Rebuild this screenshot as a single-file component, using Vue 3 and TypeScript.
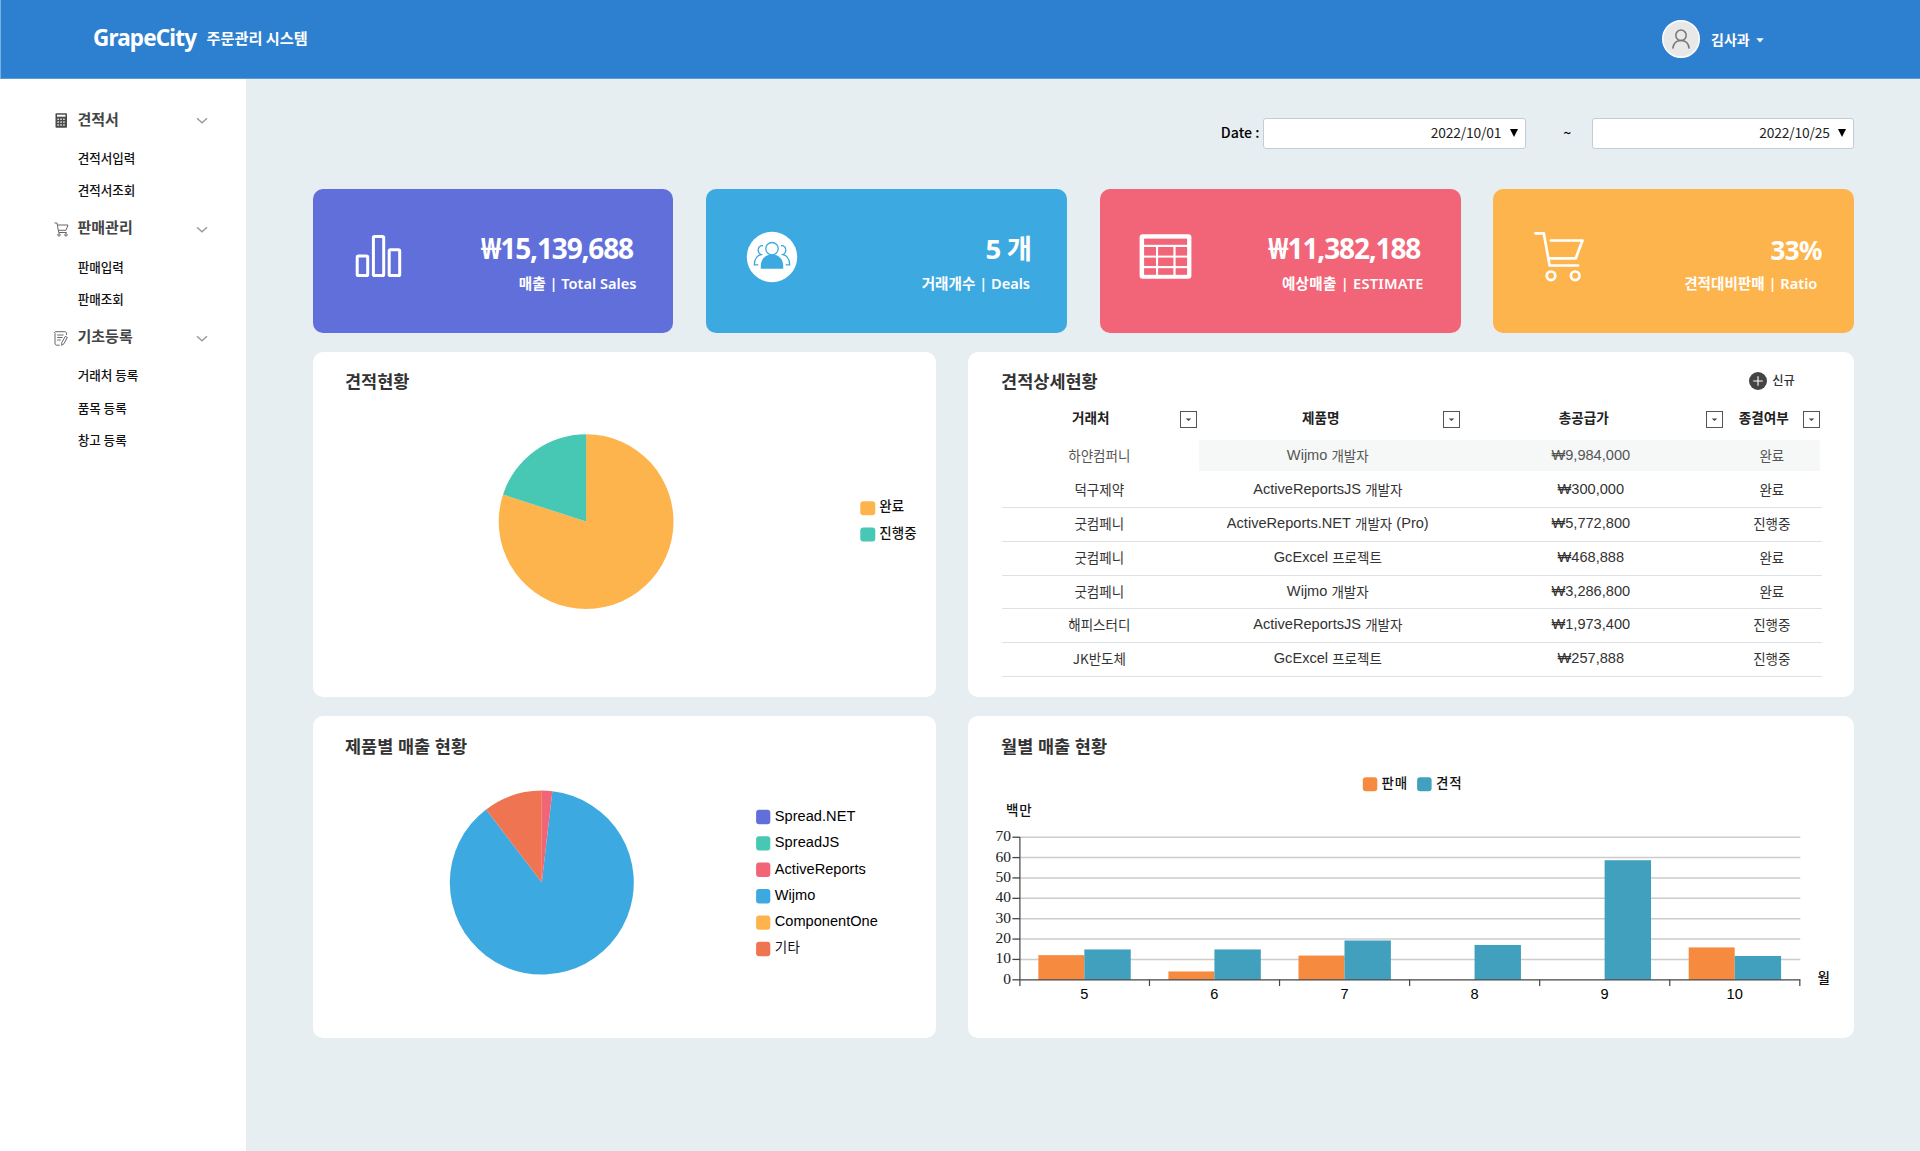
<script setup lang="ts">
interface MenuGroup { icon: 'calc' | 'cart' | 'note'; label: string; items: string[] }
interface Row { client: string; product: string; productKo: string; tail?: string; price: string; state: string }
interface Legend { label: string; color: string; width: number }

const menu: MenuGroup[] = [
  { icon: 'calc', label: '견적서', items: ['견적서입력', '견적서조회'] },
  { icon: 'cart', label: '판매관리', items: ['판매입력', '판매조회'] },
  { icon: 'note', label: '기초등록', items: ['거래처 등록', '품목 등록', '창고 등록'] },
]

const columns = ['거래처', '제품명', '총공급가', '종결여부']

const rows: Row[] = [
  { client: '하얀컴퍼니', product: 'Wijmo', productKo: '개발자', price: '9,984,000', state: '완료' },
  { client: '덕구제약', product: 'ActiveReportsJS', productKo: '개발자', price: '300,000', state: '완료' },
  { client: '굿컴페니', product: 'ActiveReports.NET', productKo: '개발자', tail: '(Pro)', price: '5,772,800', state: '진행중' },
  { client: '굿컴페니', product: 'GcExcel', productKo: '프로젝트', price: '468,888', state: '완료' },
  { client: '굿컴페니', product: 'Wijmo', productKo: '개발자', price: '3,286,800', state: '완료' },
  { client: '해피스터디', product: 'ActiveReportsJS', productKo: '개발자', price: '1,973,400', state: '진행중' },
  { client: 'JK반도체', product: 'GcExcel', productKo: '프로젝트', price: '257,888', state: '진행중' },
]

const statusLegend: Legend[] = [
  { label: '완료', color: '#feb44c', width: 25 },
  { label: '진행중', color: '#46c8b4', width: 37.5 },
]

const productLegend: Legend[] = [
  { label: 'Spread.NET', color: '#616fdb', width: 80.5 },
  { label: 'SpreadJS', color: '#46c8b4', width: 64.5 },
  { label: 'ActiveReports', color: '#f26477', width: 91 },
  { label: 'Wijmo', color: '#3caae0', width: 40.5 },
  { label: 'ComponentOne', color: '#feb44c', width: 103 },
  { label: '기타', color: '#ef7552', width: 25 },
]

// Pie sector from angle a to angle b, in degrees clockwise from the top.
function sector(cx: number, cy: number, r: number, a: number, b: number): string {
  const p = (d: number) => {
    const t = (d * Math.PI) / 180
    return `${(cx + r * Math.sin(t)).toFixed(2)} ${(cy - r * Math.cos(t)).toFixed(2)}`
  }
  return `M${cx} ${cy}L${p(a)}A${r} ${r} 0 ${b - a > 180 ? 1 : 0} 1 ${p(b)}Z`
}

const axis = { left: 1019.8, right: 1800.2, base: 979.8, unit: 2.037, step: 130.07 }
const months = [
  { name: '5', sale: 12.1, quote: 14.9 },
  { name: '6', sale: 4.1, quote: 14.9 },
  { name: '7', sale: 11.9, quote: 19.3 },
  { name: '8', sale: 0, quote: 17.1 },
  { name: '9', sale: 0, quote: 58.7 },
  { name: '10', sale: 15.9, quote: 11.7 },
]
const ticks = [0, 10, 20, 30, 40, 50, 60, 70]
const mid = (i: number) => axis.left + axis.step * (i + 0.5) - 0.6
const level = (v: number) => axis.base - v * axis.unit
</script>

<template>
  <div class="page">
    <header class="top">
      <div class="brand"><b>GrapeCity</b><span>주문관리 시스템</span></div>
      <div class="user">
        <svg class="avatar" viewBox="0 0 38 38">
          <circle cx="19" cy="19" r="18.3" fill="#e8e8e8" stroke="#fff" stroke-width="1.4" />
          <circle cx="19" cy="15.3" r="5.2" fill="none" stroke="#777" stroke-width="1.5" />
          <path d="M10.8 28.6c.6-5 3.8-8 8.2-8s7.6 3 8.2 8" fill="none" stroke="#777" stroke-width="1.5" />
        </svg>
        <span>김사과</span>
        <svg class="caret" viewBox="0 0 8 5"><path d="M.3.3h7.400L4 4.500z" fill="#fff" /></svg>
      </div>
    </header>

    <div class="body">
      <nav class="side">
        <section v-for="g in menu" :key="g.label">
          <div class="group">
            <svg v-if="g.icon === 'calc'" class="gi" viewBox="0 0 15 15">
              <rect x="1.500" y=".2" width="11.500" height="14.600" rx="1" fill="#4a4a4a" />
              <rect x="3" y="1.700" width="8.500" height="2" fill="#fff" />
              <g fill="#fff">
                <template v-for="y in 3" :key="y">
                  <rect v-for="x in 3" :key="x" :x="0.500 + x * 2.900" :y="2.500 + y * 2.900" width="1.500" height="1.500" rx=".4" />
                </template>
              </g>
            </svg>
            <svg v-else-if="g.icon === 'cart'" class="gi" viewBox="0 0 15 15" fill="none" stroke="#666" stroke-width="1">
              <path d="M.5 1h2.500l1.700 9.500h8M4 3h10l-2 5.300H4.500" />
              <circle cx="5" cy="12.900" r="1.200" /><circle cx="12" cy="12.900" r="1.200" />
            </svg>
            <svg v-else class="gi" viewBox="0 0 15 15" fill="none" stroke="#666" stroke-width="1" stroke-linejoin="round">
              <path d="M12.500 4V2.500C12.500 1.300 12 .7 10.800.7H1.500C.5.700.4 1.600 1 2.400v9.800c0 1.300.6 2 1.800 2h2.900M3.200 4h6.300M3.200 6.500h5.300M3.200 9h3.500" />
              <path d="M11.300 5.400l2 1-3.300 6.300-2.300 1.700.1-2.800z" />
            </svg>
            <span>{{ g.label }}</span>
            <svg class="chev" viewBox="0 0 12 8"><path d="M1 1.200l5 4.600 5-4.600" fill="none" stroke="#999" stroke-width="1.400" /></svg>
          </div>
          <a v-for="i in g.items" :key="i">{{ i }}</a>
        </section>
      </nav>

      <main>
        <div class="dates">
          <label>Date :</label>
          <div class="date">2022/10/01<i /></div>
          <span class="tilde">~</span>
          <div class="date">2022/10/25<i /></div>
        </div>

        <div class="cards">
          <article class="violet">
            <svg viewBox="0 0 64 60" fill="none" stroke="#fff" stroke-width="3">
              <rect x="12.200" y="27" width="10.500" height="19.600" rx="1.200" />
              <rect x="28.400" y="7.500" width="10.300" height="39.100" rx="1.200" />
              <rect x="44.200" y="20.800" width="10.500" height="25.800" rx="1.200" />
            </svg>
            <div class="info"><strong>₩15,139,688</strong><p>매출 | Total Sales</p></div>
          </article>
          <article class="blue">
            <svg viewBox="0 0 64 60" fill="none" stroke="#3caae0" stroke-width="1.300">
              <circle cx="34" cy="28" r="25.200" fill="#fff" stroke="none" />
              <circle cx="34" cy="19.700" r="6.200" />
              <path d="M22.800 39.800v-2.800c0-7 4.500-11.600 11.200-11.600S45.200 30 45.200 37v2.800z" fill="#3caae0" stroke="none" />
              <path d="M25.100 16.700c-3-.3-4.900 1.700-4.900 4.200 0 2.200 1.100 3.900 3 4.700-4.300.9-6.700 4.600-6.900 10.200h4M42.900 16.700c3-.3 4.900 1.700 4.900 4.200 0 2.200-1.100 3.900-3 4.700 4.300.9 6.700 4.600 6.900 10.200h-4" />
            </svg>
            <div class="info"><strong class="count">5 개</strong><p>거래개수 | Deals</p></div>
          </article>
          <article class="rose">
            <svg viewBox="0 0 64 60">
              <rect x="7.600" y="5.200" width="51.800" height="44.600" rx="3" fill="#fff" />
              <g fill="#f26477">
                <rect x="12.100" y="9.600" width="43" height="6.200" />
                <template v-for="r in [[18, 8.600], [28.600, 8.400], [39.200, 6.600]]" :key="r[0]">
                  <rect x="12.100" :y="r[0]" width="11.900" :height="r[1]" />
                  <rect x="26.100" :y="r[0]" width="15.300" :height="r[1]" />
                  <rect x="43.600" :y="r[0]" width="11.500" :height="r[1]" />
                </template>
              </g>
            </svg>
            <div class="info"><strong>₩11,382,188</strong><p class="wide">예상매출 | ESTIMATE</p></div>
          </article>
          <article class="amber">
            <svg viewBox="0 0 64 60" fill="none" stroke="#fff" stroke-width="2.700" stroke-linecap="round" stroke-linejoin="round">
              <path d="M10.300 4.300h8.500L24.600 36.500h28.500M25.800 11.500H57.500L50.700 29.400H24.300" />
              <circle cx="26" cy="46.800" r="4.300" /><circle cx="50.200" cy="46.800" r="4.300" />
            </svg>
            <div class="info"><strong class="ratio">33%</strong><p>견적대비판매 | Ratio</p></div>
          </article>
        </div>

        <div class="panels">
          <section class="panel">
            <h2>견적현황</h2>
            <svg class="chart" viewBox="312.7 396 623.3 300.7">
              <path :d="sector(585.8, 521.6, 87.4, 0, 288)" fill="#feb44c" />
              <path :d="sector(585.8, 521.6, 87.4, 288, 360)" fill="#46c8b4" />
              <g v-for="(l, i) in statusLegend" :key="l.label">
                <rect x="860" :y="501.200 + i * 26.400" width="15" height="14" rx="3" :fill="l.color" />
                <text x="879" :y="511.500 + i * 26.400" :textLength="l.width" class="ko">{{ l.label }}</text>
              </g>
            </svg>
          </section>

          <section class="panel">
            <div class="head">
              <h2>견적상세현황</h2>
              <button>
                <svg viewBox="0 0 18 18"><circle cx="9" cy="9" r="9" fill="#444" /><path d="M9 4.200v9.600M4.200 9h9.600" stroke="#fff" stroke-width="1.100" /></svg>
                <span>신규</span>
              </button>
            </div>
            <div class="grid">
              <div class="tr th">
                <div v-for="c in columns" :key="c"><span>{{ c }}</span>
                  <svg viewBox="0 0 17 17"><rect x=".5" y=".5" width="16" height="16" fill="#fff" stroke="#555" /><path d="M5.700 7.400h5.600L8.500 10z" fill="#444" /></svg>
                </div>
              </div>
              <div v-for="(r, i) in rows" :key="i" class="tr" :class="{ first: i === 0 }">
                <div>{{ r.client }}</div>
                <div><span class="lat">{{ r.product }}&nbsp;</span>{{ r.productKo }}<span v-if="r.tail" class="lat">&nbsp;{{ r.tail }}</span></div>
                <div class="lat">₩{{ r.price }}</div>
                <div>{{ r.state }}</div>
              </div>
            </div>
          </section>

          <section class="panel">
            <h2>제품별 매출 현황</h2>
            <svg class="chart" viewBox="312.7 760 623.3 278">
              <path :d="sector(541.5, 882.6, 92, 6.6, 322.7)" fill="#3caae0" />
              <path :d="sector(541.5, 882.6, 92, 322.7, 360)" fill="#ef7552" />
              <path :d="sector(541.5, 882.6, 92, 0, 6.6)" fill="#f26477" />
              <g v-for="(l, i) in productLegend" :key="l.label">
                <rect x="755.800" :y="809.800 + i * 26.400" width="14.200" height="14.400" rx="3" :fill="l.color" />
                <text x="774.500" :y="821 + i * 26.300" :textLength="l.width" :class="i === 5 ? 'ko thin' : 'la'">{{ l.label }}</text>
              </g>
            </svg>
          </section>

          <section class="panel">
            <h2>월별 매출 현황</h2>
            <svg class="chart" viewBox="968 760 886.3 278">
              <rect x="1362.700" y="777.300" width="14.500" height="14" rx="3" fill="#f68b3f" />
              <text x="1381.500" y="788" textLength="25.500" class="ko">판매</text>
              <rect x="1417" y="777.300" width="14.500" height="14" rx="3" fill="#40a0bd" />
              <text x="1436" y="788" textLength="25.500" class="ko">견적</text>
              <text x="1006" y="814.700" textLength="25.500" class="ko">백만</text>
              <g v-for="t in ticks" :key="t">
                <line v-if="t" :x1="axis.left" :x2="axis.right" :y1="level(t)" :y2="level(t)" stroke="#ccc" stroke-width="1.500" />
                <line :x1="axis.left - 7.500" :x2="axis.left" :y1="level(t)" :y2="level(t)" stroke="#444" stroke-width="1.300" />
                <text x="1011" :y="level(t) + 4" text-anchor="end" textLength="auto" class="se">{{ t }}</text>
              </g>
              <line :x1="axis.left" :x2="axis.left" y1="837" y2="986" stroke="#444" stroke-width="1.200" />
              <g v-for="(m, i) in months" :key="m.name">
                <rect v-if="m.sale" :x="mid(i) - 46" :y="level(m.sale)" width="46" :height="m.sale * axis.unit" fill="#f68b3f" />
                <rect :x="mid(i)" :y="level(m.quote)" width="46.400" :height="m.quote * axis.unit" fill="#40a0bd" />
                <line :x1="axis.left + (i + 1) * axis.step - 0.5" :x2="axis.left + (i + 1) * axis.step - 0.5" y1="979.600" y2="986" stroke="#444" stroke-width="1.200" />
                <text :x="mid(i)" y="998.900" text-anchor="middle" class="la">{{ m.name }}</text>
              </g>
              <line :x1="axis.left" :x2="axis.right" :y1="axis.base" :y2="axis.base" stroke="#444" stroke-width="1.200" />
              <text x="1817.500" y="983" class="ko">월</text>
            </svg>
          </section>
        </div>
      </main>
    </div>
  </div>
</template>

<style>
body { margin: 0; background: #e7eef2; }
</style>

<style scoped>
* { box-sizing: border-box; }
.page { width: 1920px; height: 1151px; overflow: hidden; background: #e7eef2; font-family: "Noto Sans", "Noto Sans CJK KR", sans-serif; color: #222; display: flex; flex-direction: column; }
.top { height: 79px; flex: none; background: #2d80cf; color: #fff; display: flex; justify-content: space-between; border-left: 1px solid #7bb0e2; border-bottom: 1px solid #5a9cda; }
.brand { display: flex; align-items: center; padding: 0 0 4px 92px; }
.brand b { font-size: 22.500px; font-weight: 700; letter-spacing: -0.850px; width: 113.500px; }
.brand span { font-family: "Noto Sans CJK KR", sans-serif; font-size: 15.200px; font-weight: 600; white-space: nowrap; }
.user { display: flex; align-items: center; width: 258.500px; font-family: "Noto Sans CJK KR", sans-serif; font-size: 14px; font-weight: 600; }
.user span { padding-bottom: 1px; }
.avatar { width: 38px; height: 38px; margin-right: 11.500px; }
.caret { width: 8px; height: 5px; margin: 3px 0 0 6px; }
.body { flex: 1; display: flex; min-height: 0; }
.side { width: 246px; flex: none; background: #fff; padding-top: 18px; font-family: "Noto Sans CJK KR", sans-serif; }
.group { height: 44.500px; display: flex; align-items: center; padding-left: 53.500px; font-size: 15px; font-weight: 600; color: #444; }
.group span { width: 118.500px; margin: -2px 0 0 9px; }
.gi { width: 15px; height: 15px; margin-top: 3px; }
.chev { width: 12px; height: 8px; margin-top: 4px; }
.side a { display: flex; align-items: center; height: 32.100px; padding-left: 77.700px; font-size: 12.550px; font-weight: 500; color: #111; }
main { flex: 1; padding: 39px 65.700px 0 66.500px; }
.dates { display: flex; justify-content: flex-end; align-items: center; height: 31px; margin-bottom: 40px; font-family: "Noto Sans CJK KR", sans-serif; font-size: 13.800px; }
.dates label { font-weight: 500; width: 42.500px; color: #000; font-size: 14.200px; padding-bottom: 4px; white-space: nowrap; }
.date { width: 262.500px; height: 31px; border: 1px solid #c3ccd8; border-radius: 3px; background: #fff; display: flex; justify-content: flex-end; align-items: center; padding: 0 7px 3px 0; letter-spacing: -0.150px; }
.date i { border: solid transparent; border-width: 8px 4px 0; border-top-color: #000; margin: 2px 0 0 8.500px; }
.tilde { width: 66px; padding: 0 0 4px 37.500px; font-weight: 500; color: #000; }
.cards { display: grid; grid-template-columns: repeat(4, 1fr); gap: 32.700px; }
article { height: 144px; border-radius: 10px; color: #fff; display: flex; justify-content: space-between; padding: 40px 37px 0 32px; }
article svg { width: 64px; height: 60px; flex: none; }
.violet { background: #616fdb; }
.blue { background: #3caae0; }
.rose { background: #f26477; }
.amber { background: #feb44c; }
.info { display: flex; flex-direction: column; align-items: flex-end; white-space: nowrap; }
.info strong { font-size: 28px; line-height: 39px; height: 40px; font-weight: 700; letter-spacing: -1.150px; margin-right: 3.500px; }
.info .count { font-size: 27.500px; letter-spacing: -0.900px; margin-right: -1px; }
.info .ratio { font-size: 26px; margin-right: -4.500px; line-height: 42px; letter-spacing: -0.600px; }
.info p { margin: 4px 0 0; font-size: 14.600px; line-height: 21px; font-weight: 600; }
.info .wide { letter-spacing: 0.250px; }
.panels { display: grid; grid-template-columns: 623.300px 1fr; grid-template-rows: 344.700px 322px; gap: 19.300px 32px; margin-top: 19px; }
.panel { background: #fff; border-radius: 10px; display: flex; flex-direction: column; padding-top: 16px; font-family: "Noto Sans CJK KR", sans-serif; }
h2 { margin: 0 0 0 32.500px; height: 28px; line-height: 25.500px; font-size: 17.500px; font-weight: 600; color: #333; white-space: nowrap; word-spacing: 0.700px; }
.panel:nth-child(even) h2 { margin-left: 33.300px; }
.panel:nth-child(n + 3) h2 { line-height: 27px; }
.chart { flex: 1; min-height: 0; width: 100%; display: block; }
.ko { font: 500 13.500px "Noto Sans CJK KR", sans-serif; fill: #111; }
.thin { font-weight: 400; }
.la { font: 14.600px "Liberation Sans", sans-serif; fill: #000; }
.se { font: 15.500px "Liberation Serif", serif; fill: #222; }
.head { display: flex; justify-content: space-between; }
button { border: 0; background: none; padding: 0; width: 105.700px; display: flex; align-items: center; gap: 5.500px; font: 500 12.300px "Noto Sans CJK KR", sans-serif; color: #333; height: 25px; }
button svg { width: 18px; height: 18px; }
button span { padding-bottom: 2px; }
.grid { margin: 0 32.500px 0 34px; padding-top: 7px; font-size: 13.500px; color: #333; }
.tr { display: grid; grid-template-columns: 197px 263px 263px 1fr; height: 33.900px; border-bottom: 1px solid #dde1e8; }
.tr > div { display: flex; align-items: center; justify-content: center; padding: 0 5px 3px 0; white-space: nowrap; }
.tr > div:first-child { padding-right: 2px; }
.tr > div:last-child { padding-right: 3px; }
.tr.th { height: 37px; border: 0; font-weight: 600; font-size: 13.600px; color: #222; }
.tr.th > div { padding: 0 2px 5px 0; }
.tr.th span { flex: 1; text-align: center; padding-bottom: 4px; }
.tr.th svg { width: 17px; height: 17px; flex: none; }
.tr.first { border: 0; color: #555; }
.tr.first > div { height: 31px; padding-bottom: 2px; }
.tr.first > div:not(:first-child) { background: #f6f8f8; }
.tr.first > div:last-child { margin-right: 2px; padding-right: 1px; }
.lat { font-family: "Liberation Sans", "Noto Sans CJK KR", sans-serif; font-size: 14.600px; }
</style>
